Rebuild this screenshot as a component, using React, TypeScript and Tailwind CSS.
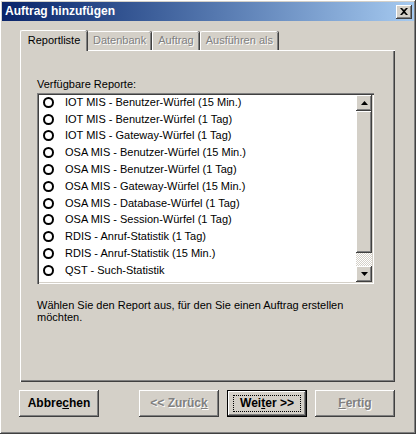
import React from "react"

const reports = [
  "IOT MIS - Benutzer-Würfel (15 Min.)",
  "IOT MIS - Benutzer-Würfel (1 Tag)",
  "IOT MIS - Gateway-Würfel (1 Tag)",
  "OSA MIS - Benutzer-Würfel (15 Min.)",
  "OSA MIS - Benutzer-Würfel (1 Tag)",
  "OSA MIS - Gateway-Würfel (15 Min.)",
  "OSA MIS - Database-Würfel (1 Tag)",
  "OSA MIS - Session-Würfel (1 Tag)",
  "RDIS - Anruf-Statistik (1 Tag)",
  "RDIS - Anruf-Statistik (15 Min.)",
  "QST - Such-Statistik",
]

// classic raised 3d edge
const raised =
  "shadow-[inset_-1px_-1px_#404040,inset_1px_1px_#ffffff,inset_-2px_-2px_#808080,inset_2px_2px_#d4d0c8]"

function DialogButton({
  children,
  disabled,
  isDefault,
}: {
  children: React.ReactNode
  disabled?: boolean
  isDefault?: boolean
}) {
  if (isDefault) {
    return (
      <div className="flex h-[27px] w-[80px] border border-black">
        <div className="flex flex-1 items-center justify-center bg-[#d4d0c8] shadow-[inset_-1px_-1px_#404040,inset_1px_1px_#ffffff,inset_-2px_-2px_#808080]">
          <div className="flex h-[17px] w-[68px] items-center justify-center border border-dotted border-black text-[12px] font-bold text-black">
            {children}
          </div>
        </div>
      </div>
    )
  }
  return (
    <div
      className={`flex h-[27px] w-[80px] items-center justify-center bg-[#d4d0c8] text-[12px] font-bold ${raised} ${
        disabled ? "text-[#808080] [text-shadow:1px_1px_0_#ffffff]" : "text-black"
      }`}
    >
      {children}
    </div>
  )
}

function Tab({ label, active }: { label: string; active?: boolean }) {
  if (active) {
    return (
      <div className="relative z-10 -mb-px flex h-[21px] w-[67px] items-center justify-center rounded-t-[2px] border-l border-t border-white bg-[#d4d0c8] pb-[2px] text-black shadow-[inset_-1px_0_#808080,1px_0_#404040]">
        {label}
      </div>
    )
  }
  return (
    <div className="flex h-[19px] items-center rounded-t-[2px] border-l border-t border-white bg-[#d4d0c8] px-[5px] pb-[1px] text-[#808080] shadow-[inset_-1px_0_#808080,1px_0_#404040] [text-shadow:1px_1px_0_#ffffff]">
      {label}
    </div>
  )
}

function Radio() {
  return <div className="h-[11px] w-[11px] shrink-0 rounded-full border-2 border-black bg-white" />
}

function Arrow({ up }: { up?: boolean }) {
  return (
    <svg width="7" height="4" viewBox="0 0 7 4">
      <path d={up ? "M3.5 0 L7 4 L0 4 Z" : "M0 0 L7 0 L3.5 4 Z"} fill="#000" />
    </svg>
  )
}

export default function App() {
  return (
    <div
      className={`flex h-[434px] w-[416px] flex-col bg-[#d4d0c8] p-[2px] text-[11px] leading-[13px] text-black ${raised}`}
      style={{ fontFamily: '"Liberation Sans", Arial, sans-serif' }}
    >
      {/* Titelleiste */}
      <div className="flex h-[19px] items-center justify-between bg-gradient-to-r from-[#0a246a] to-[#a6caf0] pl-[3px] pr-[2px]">
        <span className="text-[12px] font-bold text-white">Auftrag hinzufügen</span>
        <div className={`flex h-[14px] w-[16px] items-center justify-center bg-[#d4d0c8] ${raised}`}>
          <svg width="8" height="7" viewBox="0 0 8 7">
            <path d="M0 0h2l2 2 2-2h2L5 3.5 8 7H6L4 5 2 7H0l3-3.5z" fill="#000" />
          </svg>
        </div>
      </div>

      {/* Registerkarten */}
      <div className="ml-[18px] mt-[9px] flex items-end">
        <Tab label="Reportliste" active />
        <Tab label="Datenbank" />
        <div className="w-px" />
        <Tab label="Auftrag" />
        <div className="w-px" />
        <Tab label="Ausführen als" />
      </div>

      <div className="ml-[18px] mr-[19px] flex h-[332px] flex-col border-l border-t border-white px-[16px] pt-[27px] shadow-[inset_-1px_-1px_#404040,inset_-2px_-2px_#808080]">
        <div className="mb-[2px]">Verfügbare Reporte:</div>

        {/* Liste */}
        <div className="flex h-[191px] w-[337px] bg-white p-[2px] shadow-[inset_1px_1px_#808080,inset_2px_2px_#404040,inset_-1px_-1px_#ffffff,inset_-2px_-2px_#d4d0c8]">
          <div className="-mt-[1px] flex flex-1 flex-col">
            {reports.map((r) => (
              <div key={r} className="flex h-[16.8px] items-center gap-[11px] pl-[4px]">
                <Radio />
                <span>{r}</span>
              </div>
            ))}
          </div>
          <div className="flex w-[16px] flex-col">
            <div className={`flex h-[16px] items-center justify-center bg-[#d4d0c8] ${raised}`}>
              <Arrow up />
            </div>
            <div className={`h-[142px] bg-[#d4d0c8] ${raised}`} />
            <div className="flex-1 bg-[repeating-conic-gradient(#ffffff_0_25%,#d4d0c8_0_50%)] bg-[length:2px_2px]" />
            <div className={`flex h-[16px] items-center justify-center bg-[#d4d0c8] ${raised}`}>
              <Arrow />
            </div>
          </div>
        </div>

        <div className="mt-[15px] leading-[12px]">
          Wählen Sie den Report aus, für den Sie einen Auftrag erstellen
          <br />
          möchten.
        </div>
      </div>

      {/* Schaltflächen */}
      <div className="mt-[8px] flex items-start pl-[17px]">
        <DialogButton>
          Abbre<u>c</u>hen
        </DialogButton>
        <div className="w-[40px]" />
        <DialogButton disabled>
          &lt;&lt; Zurüc<u>k</u>
        </DialogButton>
        <div className="w-[8px]" />
        <DialogButton isDefault>
          Wei<u>t</u>er &gt;&gt;
        </DialogButton>
        <div className="w-[8px]" />
        <DialogButton disabled>
          <u>F</u>ertig
        </DialogButton>
      </div>
    </div>
  )
}
